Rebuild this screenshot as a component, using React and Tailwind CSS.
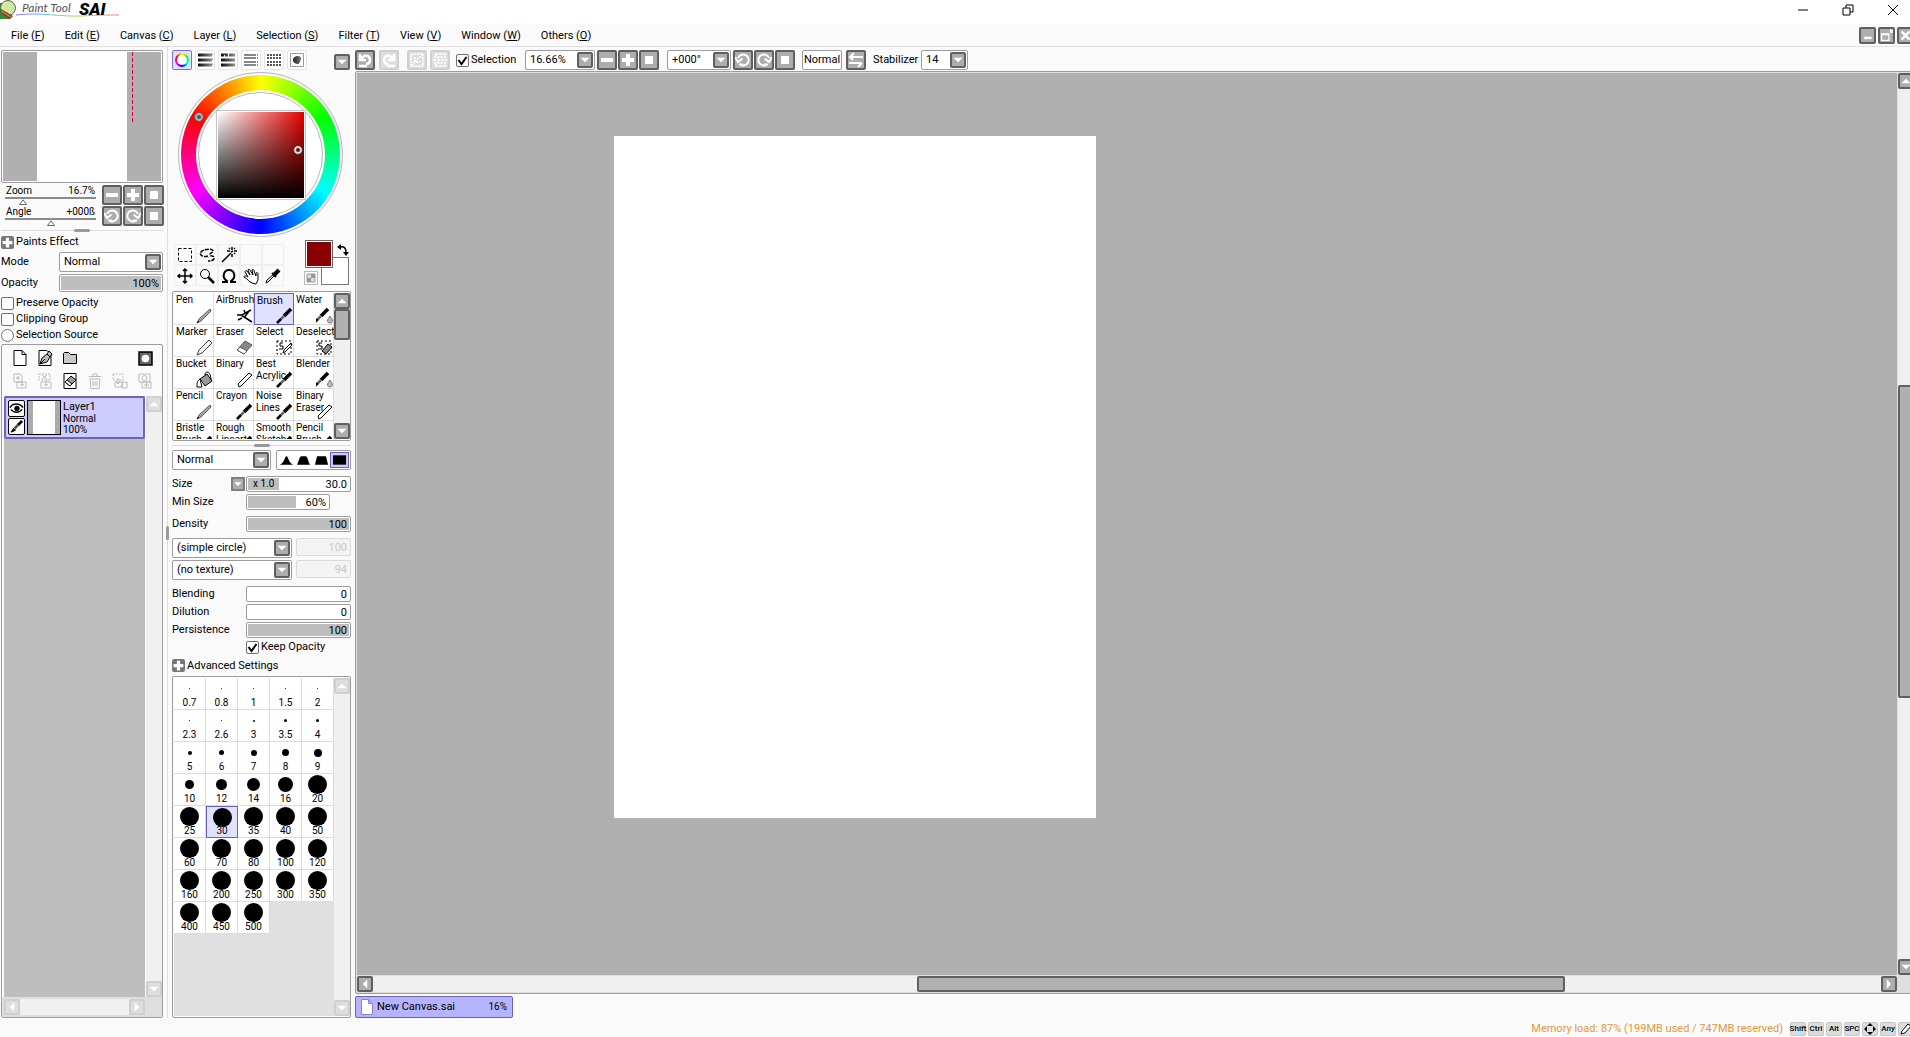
import { Fragment } from "react";

const MENUS = [
  ["File", "F"],
  ["Edit", "E"],
  ["Canvas", "C"],
  ["Layer", "L"],
  ["Selection", "S"],
  ["Filter", "T"],
  ["View", "V"],
  ["Window", "W"],
  ["Others", "O"],
];

const BRUSHES = [
  ["Pen", "pencil"],
  ["AirBrush", "airbrush"],
  ["Brush", "brush"],
  ["Water", "water"],
  ["Marker", "marker"],
  ["Eraser", "eraser"],
  ["Select", "select"],
  ["Deselect", "deselect"],
  ["Bucket", "bucket"],
  ["Binary", "binary"],
  ["Best Acrylic", "brush"],
  ["Blender", "water"],
  ["Pencil", "pencil"],
  ["Crayon", "brush"],
  ["Noise Lines", "brush"],
  ["Binary Eraser", "binary"],
  ["Bristle Brush", "brush"],
  ["Rough Lineart", "brush"],
  ["Smooth Sketch", "brush"],
  ["Pencil Brush", "brush"],
];

// [label, dot diameter]
const SIZES = [
  ["0.7", 1], ["0.8", 1], ["1", 1], ["1.5", 1], ["2", 1],
  ["2.3", 1], ["2.6", 1], ["3", 2], ["3.5", 3], ["4", 3],
  ["5", 4], ["6", 5], ["7", 6], ["8", 7], ["9", 8],
  ["10", 9], ["12", 11], ["14", 13], ["16", 15], ["20", 19],
  ["25", 19], ["30", 19], ["35", 19], ["40", 19], ["50", 19],
  ["60", 19], ["70", 19], ["80", 19], ["100", 19], ["120", 19],
  ["160", 19], ["200", 19], ["250", 19], ["300", 19], ["350", 19],
  ["400", 19], ["450", 19], ["500", 19],
];

const GLYPHS = {
  minus: <path d="M2 8h12" strokeWidth="4" />,
  plus: <path d="M2 8h12M8 2v12" strokeWidth="4" />,
  square: <path d="M4.500 4.500h7v7h-7z" fill="white" strokeWidth="1" />,
  down: <path d="M2 5h12l-6 6z" fill="white" stroke="none" />,
  up: <path d="M2 11h12L8 5z" fill="white" stroke="none" />,
  left: <path d="M11 2v12L5 8z" fill="white" stroke="none" />,
  right: <path d="M5 2v12l6-6z" fill="white" stroke="none" />,
  ccw: <path d="M5 12.500A5.500 5.500 0 1 0 3 6M0 5l3 5 4.500-3.500M8 12.500H4" strokeWidth="2" />,
  cw: <path d="M11 12.500A5.500 5.500 0 1 1 13 6M16 5l-3 5-4.500-3.500M8 12.500h4" strokeWidth="2" />,
  undo: <path d="M3 2v6h6M4 7C7 2 13 3 13 8c0 2.500-1.500 4-4 4M2 14h8" strokeWidth="2.500" />,
  redo: <path d="M13 2v6H7M12 7C9 2 3 3 3 8c0 2.500 1.500 4 4 4M6 14h8" strokeWidth="2.500" />,
  deselect: <path d="M2 2h12v12H2zM12 4l-6 5M6 5v5h5M3 13l3-3" strokeWidth="1.500" strokeDasharray="2 1" />,
  invert: <path d="M3 6V2h10v4M3 10v4h10v-4M1 8h14M5 6l3-2 3 2M5 10l3 2 3-2" strokeWidth="1.500" strokeDasharray="3 1" />,
  swap: <path d="M15 5H3M6 1L2 5l3 3M1 11h12M10 15l4-4" strokeWidth="2" />,
  min: <path d="M4 11h9" strokeWidth="3" />,
  restore: <path d="M2 6h9v8H2zM2 7h9M13 0v4h3M13 4l3-3" strokeWidth="1.500" />,
  close: <path d="M3 3l10 10M13 3L3 13" strokeWidth="3" />,
};

const BUTTON_SIZES = { sm: "size-4", md: "size-[17px]", lg: "size-5" };

function Glyph({ name }) {
  return (
    <svg viewBox="0 0 16 16" className="w-full h-full" fill="none" stroke="white" aria-hidden="true">
      {GLYPHS[name]}
    </svg>
  );
}

function ToolButton({ glyph, label, size = "lg", faded }) {
  return (
    <button
      aria-label={label}
      className={`shrink-0 border-2 rounded-xs ${BUTTON_SIZES[size]} ${
        faded ? "border-[#cfcfcf] bg-[#dedede]" : "border-[#606060] bg-[#adadad]"
      }`}
    >
      <Glyph name={glyph} />
    </button>
  );
}

function Select({ label, value, className = "" }) {
  return (
    <div className={`relative h-5 border border-[#9c9c9c] rounded-xs bg-white ${className}`}>
      <select aria-label={label} className="appearance-none w-full h-full pl-1 pr-4 outline-none bg-transparent">
        <option>{value}</option>
      </select>
      <span className="absolute right-px top-px size-4 border-2 border-[#606060] bg-[#adadad] rounded-xs pointer-events-none">
        <Glyph name="down" />
      </span>
    </div>
  );
}

function Gauge({ id, value, fill = 0, className = "h-4", disabled, children }) {
  return (
    <div
      className={`relative border rounded-xs p-px ${
        disabled ? "border-[#dadada] bg-[#f3f3f3] text-[#c8c8c8]" : "border-[#9c9c9c] bg-white"
      } ${className}`}
    >
      <div className="h-full bg-[#bebebe]" style={{ width: `${fill}%` }} />
      {children}
      <input
        id={id}
        aria-label={id}
        defaultValue={value}
        disabled={disabled}
        className="absolute inset-0 w-full h-full pr-[3px] bg-transparent text-right outline-none"
      />
    </div>
  );
}

function Check({ type = "checkbox", label, checked, className = "" }) {
  return (
    <label className={`flex items-center gap-[2px] h-4 ${className}`}>
      <span className="relative size-[13px] shrink-0">
        <input
          type={type}
          defaultChecked={checked}
          className={`block appearance-none size-[13px] border border-[#707070] bg-white ${
            type === "radio" ? "rounded-full" : "rounded-xs"
          }`}
        />
        {checked && (
          <svg viewBox="0 0 13 13" className="absolute inset-0 pointer-events-none" fill="none" stroke="black" strokeWidth="2">
            <path d="M2.500 6l3 4 5-7" />
          </svg>
        )}
      </span>
      {label}
    </label>
  );
}

function Grip() {
  return (
    <div className="h-[3px] flex items-center">
      <div className="flex-1 h-px bg-[#dcdcdc]" />
      <div className="w-4 h-[3px] rounded-xs bg-[#999999]" />
      <div className="flex-1 h-px bg-[#dcdcdc]" />
    </div>
  );
}

function VBar({ faded, children }) {
  return (
    <div className="w-4 shrink-0 flex flex-col bg-[#f0f0f0]">
      <ToolButton glyph="up" label="Scroll up" size="sm" faded={faded} />
      <div className="flex-1 min-h-0 flex flex-col">{children}</div>
      <ToolButton glyph="down" label="Scroll down" size="sm" faded={faded} />
    </div>
  );
}

function Header() {
  return (
    <header className="shrink-0">
      <div className="h-6 bg-white flex items-start">
        <svg width="122" height="22" viewBox="0 0 122 22" className="overflow-visible" aria-label="PaintTool SAI">
          <path d="M0 3h10v16H0z" fill="#2f8a3c" />
          <circle cx="8" cy="8" r="7.500" fill="#d3e8a4" stroke="#55703f" />
          <path d="M1 9l12 7-3 3L0 12z" fill="#6d3d2c" />
          <path d="M1 11l10 6" stroke="#df6a4a" strokeWidth="1.500" />
          <path d="M16 15c25-3 45 2 65 1s25-1 38-1" fill="none" stroke="url(#rainbow)" strokeWidth="1" />
          <defs>
            <linearGradient id="rainbow">
              <stop offset="0" stopColor="#9a6be0" />
              <stop offset=".3" stopColor="#5bc7e8" />
              <stop offset=".5" stopColor="#8ade6c" />
              <stop offset=".75" stopColor="#f0b13f" />
              <stop offset="1" stopColor="#ee7d7d" />
            </linearGradient>
          </defs>
          <text x="22" y="12" fontSize="12" fontStyle="italic" fill="#555" fontFamily="Lato, sans-serif">
            Paint Tool
          </text>
          <text x="79" y="15" fontSize="17" fontWeight="900" fontStyle="italic" fontFamily="Roboto, sans-serif">
            SAI
          </text>
        </svg>
        <div className="ml-auto flex gap-[33px] pr-[11px] pt-1">
          {["M1 6h10", "M1 4h7v7H1zM4 4V1h7v7H8", "M1 1l10 10M11 1L1 11"].map((d, i) => (
            <button key={d} aria-label={["Minimize", "Restore", "Close"][i]}>
              <svg width="12" height="12" fill="none" stroke="black" strokeWidth="1">
                <path d={d} />
              </svg>
            </button>
          ))}
        </div>
      </div>
      <nav className="h-[23px] flex items-center border-b border-[#e2e2e2] pl-[11px]">
        {MENUS.map(([name, key]) => (
          <button key={name} className="mr-5 pt-px">
            {name} (<span className="underline">{key}</span>)
          </button>
        ))}
        <div className="ml-auto -mr-1 flex gap-[2px] shrink-0">
          <ToolButton glyph="min" label="Minimize canvas" size="md" />
          <ToolButton glyph="restore" label="Restore canvas" size="md" />
          <ToolButton glyph="close" label="Close canvas" size="md" />
        </div>
      </nav>
    </header>
  );
}

function ViewSlider({ id, label, value, percent }) {
  return (
    <div className="w-[91px] h-5">
      <div className="flex justify-between h-3 leading-3 text-[10px] px-px">
        <label htmlFor={id}>{label}</label>
        <output htmlFor={id}>{value}</output>
      </div>
      <div className="relative h-2 border-t-2 border-[#8c8c8c]">
        <input id={id} type="range" defaultValue={percent} className="absolute inset-0 w-full h-full opacity-0" />
        <svg
          width="9"
          height="6"
          className="absolute top-0 -translate-x-1/2 pointer-events-none"
          style={{ left: `${percent}%` }}
          fill="white"
          stroke="#666"
        >
          <path d="M4.500 .8L8 5.500H1z" />
        </svg>
      </div>
    </div>
  );
}

function LayerIcon({ label, faded, children }) {
  return (
    <button aria-label={label} className={`w-[25px] h-4 flex justify-center ${faded ? "opacity-25" : ""}`}>
      <svg width="16" height="16" viewBox="0 0 16 16" fill="white" stroke="black">
        {children}
      </svg>
    </button>
  );
}

function LayerPanel() {
  return (
    <section className="flex-1 min-h-0 flex flex-col border border-[#9c9c9c] rounded-xs mt-px">
      <div className="flex px-[5px] pt-[5px]">
        <LayerIcon label="New layer">
          <path d="M2 .5h8l4 4v11H2zM10 .5v4h4" />
        </LayerIcon>
        <LayerIcon label="New linework layer">
          <path d="M2 .5h8l4 4v11H2z" />
          <path d="M3 14l2-6 5-4 3 3-3 5zM3 14l5-5M10 4l2-3 3 3-2 3" fill="#bbb" />
        </LayerIcon>
        <LayerIcon label="New folder">
          <path d="M1.500 3.500l1-1h4l2 2h6v9h-13z" fill="#c8c8c8" />
        </LayerIcon>
        <div className="flex-1" />
        <LayerIcon label="Layer mask">
          <path d="M2 2h13v13H2z" fill="#666" strokeWidth="1.500" />
          <circle cx="8.500" cy="8.500" r="3.800" stroke="none" />
        </LayerIcon>
      </div>
      <div className="flex px-[5px] mt-[7px] mb-[7px]">
        <LayerIcon label="Transfer down" faded>
          <path d="M2 1h6l2 2v6H2zM5 9h9v6H5zM6 3v4M4 5h4M10 9v4l-2-2M10 13l2-2" />
        </LayerIcon>
        <LayerIcon label="Merge down" faded>
          <path d="M2 1h11v6H2z" strokeDasharray="2 1" />
          <path d="M4 9h10v6H4zM9 7v6l-2-2M9 13l2-2M5 2l5 4M10 2L5 6" />
        </LayerIcon>
        <LayerIcon label="Clear layer">
          <path d="M2 .5h12v15H2z" />
          <path d="M3 9l6-6 5 4-6 6z" fill="#999" />
          <path d="M3 9l2-2 5 4-2 2z" />
        </LayerIcon>
        <LayerIcon label="Delete layer" faded>
          <path d="M2 3.500h12M6 3V1h4v2M3 6h10l-1 9.500H4zM6 8v5M8 8v5M10 8v5" />
        </LayerIcon>
        <LayerIcon label="Merge group" faded>
          <path d="M1 1h10v6H1z" strokeDasharray="2 1" />
          <path d="M3 9h7v5H3zM10 9h5v6h-5zM6 5v6l-2-2M6 11l2-2" />
        </LayerIcon>
        <LayerIcon label="Apply mask" faded>
          <path d="M2 1h11v8H2zM5 9h9v6H5zM7 12h5M9.500 10v4" />
          <circle cx="7.500" cy="5" r="2.500" />
        </LayerIcon>
      </div>
      <div className="flex-1 min-h-0 flex pl-[2px]">
        <div className="flex-1 bg-[#bebebe] mr-px">
          <div className="h-[43px] border-2 border-[#6f63b8] rounded-xs bg-[#ccccff] p-[2px] flex gap-[2px]">
            <div className="flex flex-col gap-px">
              <button aria-label="Toggle visibility" className="size-[17px] border border-black rounded-xs bg-white">
                <svg viewBox="0 0 16 16" fill="none" stroke="black">
                  <path d="M1 7c3-5 10-5 14 0M2 9c3 4 9 4 12 0" strokeWidth="1.500" />
                  <circle cx="8.500" cy="8" r="2.500" fill="black" />
                </svg>
              </button>
              <button aria-label="Edit target" className="size-[17px] border border-black rounded-xs bg-white">
                <svg viewBox="0 0 16 16" stroke="black">
                  <path d="M2 14l3-4 2 2z" />
                  <path d="M6 10l5-5" strokeWidth="3" stroke="#555" />
                  <path d="M10 6l4-4" strokeWidth="3" />
                </svg>
              </button>
            </div>
            <div className="w-[34px] h-[35px] border border-black bg-[#aaaaaa] px-[5px]">
              <div className="h-full bg-white" />
            </div>
            <div className="text-[10px] leading-[11px] pt-px">
              <p className="text-[11px] leading-3">Layer1</p>
              <p>Normal</p>
              <p>100%</p>
            </div>
          </div>
        </div>
        <VBar faded />
      </div>
      <div className="flex p-[2px] pr-px bg-[#dedede]">
        <ToolButton glyph="left" label="Scroll left" size="sm" faded />
        <div className="flex-1 bg-[#f0f0f0]" />
        <ToolButton glyph="right" label="Scroll right" size="sm" faded />
        <div className="w-4" />
      </div>
    </section>
  );
}

function Navigator() {
  return (
    <aside className="w-[163px] shrink-0 flex flex-col pl-px pt-[3px]">
      <div className="h-[133px] shrink-0 border border-[#9c9c9c] rounded-xs p-px">
        <div className="h-full bg-[#b0b0b0] pl-[34px]">
          <div className="h-full w-[90px] bg-white relative">
            <div className="absolute top-0 left-[95px] w-px h-[70px] bg-[repeating-linear-gradient(#e0003c_0_4px,transparent_4px_6px)]" />
          </div>
        </div>
      </div>
      <div className="grid grid-cols-[100px_20px_20px_20px] gap-y-px pt-[2px] gap-x-px">
        <div className="pl-1">
          <ViewSlider id="zoom" label="Zoom" value="16.7%" percent={20} />
        </div>
        <ToolButton glyph="minus" label="Zoom out" />
        <ToolButton glyph="plus" label="Zoom in" />
        <ToolButton glyph="square" label="Reset zoom" />
        <div className="pl-1">
          <ViewSlider id="angle" label="Angle" value="+000ß" percent={50} />
        </div>
        <ToolButton glyph="ccw" label="Rotate left" />
        <ToolButton glyph="cw" label="Rotate right" />
        <ToolButton glyph="square" label="Reset rotation" />
      </div>
      <div className="pt-[3px]">
        <Grip />
      </div>
      <button className="flex items-center gap-[2px] h-5">
        <span className="size-[13px] bg-[#777] rounded-xs">
          <Glyph name="plus" />
        </span>
        Paints Effect
      </button>
      <div className="flex items-center">
        <span className="w-[58px]">Mode</span>
        <Select label="Mode" value="Normal" className="flex-1" />
      </div>
      <div className="flex items-center mt-0.5 mb-[3px]">
        <label htmlFor="Opacity" className="w-[58px]">Opacity</label>
        <Gauge id="Opacity" value="100%" fill={100} className="flex-1 h-[18px]" />
      </div>
      <Check label="Preserve Opacity" />
      <Check label="Clipping Group" />
      <Check type="radio" label="Selection Source" />
      <LayerPanel />
    </aside>
  );
}

function ColorWheel() {
  return (
    <div className="ml-1.5 mt-[2px] size-[165px] shrink-0 rounded-full border border-[#b5b5b5] p-[2px] relative">
      <div className="size-full rounded-full p-[15px] bg-[conic-gradient(#ff0,#0f0,#0ff,#00f,#f0f,#f00,#ff0)]">
        <div className="size-full rounded-full bg-white p-[2px]">
          <div className="size-full rounded-full border border-[#b5b5b5] flex items-center justify-center">
            <div className="border border-[#c5c5c5] p-px bg-white">
              <div className="size-[86px] bg-[linear-gradient(to_top,#000,transparent),linear-gradient(to_right,#fff,#e80000)]" />
            </div>
          </div>
        </div>
      </div>
      <span className="absolute left-4 top-10 size-2 rounded-full border-2 border-[#b0b0b0] bg-[#555] outline outline-[#666]" />
      <span className="absolute left-[115px] top-[73px] size-2 rounded-full border-2 border-[#e0e0e0] outline outline-[#444]" />
    </div>
  );
}

const TOOLS = [
  ["Rectangle select", <path key="a" d="M2.500 2.500h13v13h-13z" strokeDasharray="3 2" />],
  ["Lasso", <path key="a" d="M10 10C4 12 1 8 3 6c2-3 12-4 12-1 0 2-4 2-3 4s4 0 4 3-4 3-6 3" strokeDasharray="4 1" strokeWidth="1.500" />],
  ["Magic wand", <path key="a" d="M2 16l9-9M12 1v3M12 8v3M7 5h3M14 5h3M9 2l1 1M15 2l-1 1M15 8l-1-1M13 5l-2 1" strokeWidth="1.500" />],
  ["Empty slot", null],
  ["Empty slot", null],
  ["Move", <path key="a" d="M9 2v14M2 9h14M7 4l2-2 2 2M7 14l2 2 2-2M4 7L2 9l2 2M14 7l2 2-2 2" strokeWidth="1.500" />],
  ["Magnifier", <g key="a"><circle cx="7" cy="7" r="4.500" /><path d="M10 10l6 6" strokeWidth="2.500" /></g>],
  ["Rotate", <path key="a" d="M2 15h5v-1C1 10 4 3 9 3s8 7 2 11v1h5" strokeWidth="2" />],
  [
    "Hand",
    <path
      key="a"
      d="M10 16C7 15 6 12 2 10c0-2 2-1 4 0L3 5c0-1 1-2 2-1l3 4L6 3c0-1 2-1 2 0l3 5-1-5c1-1 2 0 2 1l2 5 0-3c1-1 2 0 2 1v6l-2 4z"
      fill="white"
    />,
  ],
  ["Eyedropper", <g key="a"><path d="M10 8l5-5" strokeWidth="4" /><path d="M8 6l4 4" strokeWidth="2" /><path d="M2 16l1-3 7-6 1 1-7 7z" /></g>],
];

function Toolbox() {
  return (
    <div className="flex pl-0.5 pr-0.5 mt-[7px]">
      <div className="grid grid-cols-[repeat(5,22px)] grid-rows-[21px_21px]">
        {TOOLS.map(([label, icon], i) => (
          <button key={i} aria-label={label} className="border border-[#efefef] flex items-center justify-center">
            <svg width="18" height="18" fill="none" stroke="black" strokeWidth="1">
              {icon}
            </svg>
          </button>
        ))}
      </div>
      <div className="relative ml-auto w-[45px] h-[45px] -mt-1">
        <button aria-label="Secondary color" className="absolute right-0 bottom-0 size-7 border border-[#777] bg-white" />
        <button aria-label="Primary color" className="absolute left-px top-0 size-7 border border-[#666] bg-white p-px">
          <span className="block size-full bg-[#8b0000]" />
        </button>
        <button aria-label="Transparent color" className="absolute left-0 bottom-0 size-3.5 border border-[#bbb] bg-white">
          <svg viewBox="0 0 12 12">
            <path d="M2 2h8v8H2z" fill="#ddd" stroke="#999" />
            <path d="M6 2h4v4H6zM2 6h4v4H2z" fill="#999" />
          </svg>
        </button>
        <svg width="12" height="12" className="absolute right-0 top-1" stroke="black" strokeWidth="1.500">
          <path d="M3 3c4-1 6 1 6 5" fill="none" />
          <path d="M4 0v6L0 3zM6 8h6l-3 4z" stroke="none" />
        </svg>
      </div>
    </div>
  );
}

const DROP = <path d="M14 9c-3.500 4-3 7 0 7s3.500-3 0-7z" fill="#bbb" stroke="#777" />;
const BRUSH = (
  <>
    <path d="M8 9l7-7" strokeWidth="3.500" />
    <path d="M5 12l3-3" strokeWidth="2.500" stroke="#666" />
    <path d="M1 16l4-4" strokeWidth="2.500" />
  </>
);

const BRUSH_ICONS = {
  pencil: (
    <>
      <path d="M1 16l2-4L14 2l1 2L5 14z" fill="#aaa" stroke="#555" />
      <path d="M1 16l2-2" />
    </>
  ),
  marker: <path d="M1 16l2-5L13 1l3 3L6 14z" fill="#eee" stroke="#444" />,
  binary: <path d="M3 16l-1-3L13 2l3 2L5 15z" fill="white" />,
  eraser: (
    <>
      <path d="M1 11L9 2l7 4-8 9z" fill="#888" stroke="#555" />
      <path d="M1 11l3-3 7 4-3 3z" fill="white" stroke="#555" />
    </>
  ),
  airbrush: <path d="M1 8h5l9-5M5 8l11 7M6 11l-4 2M9 6L8 3M13 4l-5 7" strokeWidth="1.500" fill="none" />,
  brush: BRUSH,
  water: (
    <>
      <g transform="translate(-3 0)">{BRUSH}</g>
      {DROP}
    </>
  ),
  select: (
    <>
      <path d="M1 2h14v13H1z" fill="none" strokeDasharray="2 2" />
      <path d="M7 4H4v3h3v3H3M7 14l1-3 7-7 1 2-7 7z" fill="none" />
    </>
  ),
  deselect: (
    <>
      <path d="M1 2h14v13H1z" fill="none" strokeDasharray="2 2" />
      <path d="M6 4H3v3h3v3H2" fill="none" />
      <path d="M6 12l6-7 4 3-6 7z" fill="#888" />
    </>
  ),
  bucket: (
    <>
      <path d="M4 8l7-5 5 7-7 5z" fill="#999" />
      <path d="M4 8c-3 2-3 4-3 8h5L4 8M9 4c0-5 6-4 6 5" fill="none" />
    </>
  ),
};

function BrushGrid() {
  return (
    <div className="h-[150px] shrink-0 border border-[#9c9c9c] rounded-xs pl-px py-px flex mt-[5px]">
      <div className="w-40 shrink-0 h-full overflow-hidden grid grid-cols-4 auto-rows-[32px] content-start bg-white">
        {BRUSHES.map(([name, icon], i) => (
          <button
            key={name}
            className={`relative text-left text-[10px] leading-3 pl-[2px] pt-px flex flex-col ${
              i === 2 ? "border border-[#6a62b8] bg-[#e0e0ff]" : "border-r border-b border-[#dcdcdc]"
            }`}
          >
            {name.split(" ").map((word) => (
              <span key={word}>{word}</span>
            ))}
            <svg width="17" height="17" className="absolute right-0 bottom-0" stroke="black" fill="black">
              {BRUSH_ICONS[icon]}
            </svg>
          </button>
        ))}
      </div>
      <VBar>
        <div className="h-[31px] border-2 border-[#606060] bg-[#b0b0b0] rounded-xs" />
      </VBar>
    </div>
  );
}

const SHAPES = [
  "M1 12C6 10 6 3 8 3s2 7 7 9z",
  "M1 12C3 10 3 3 6 3h4c3 0 3 7 5 9z",
  "M1 12L3 4q0-1 1-1h8q1 0 1 1l2 8z",
  "M1 2h14v10H1z",
];

function BrushSettings() {
  return (
    <div className="shrink-0">
      <div className="flex gap-[5px] mt-[3px]">
        <Select label="Blend mode" value="Normal" className="w-[99px]" />
        <div className="flex-1 h-5 border border-[#9c9c9c] rounded-xs bg-white flex p-px">
          {SHAPES.map((d, i) => (
            <button
              key={d}
              aria-label={`Edge shape ${i + 1}`}
              className={`flex-1 flex items-center justify-center ${i === 3 ? "border border-[#6a62b8] bg-[#ccccff]" : ""}`}
            >
              <svg width="15" height="14" viewBox="0 0 16 14">
                <path d={d} />
              </svg>
            </button>
          ))}
        </div>
      </div>
      <div className="grid grid-cols-[74px_1fr] auto-rows-[18px] items-center mt-[5px]">
        <label htmlFor="Size" className="flex justify-between items-center pr-px">
          Size
          <span className="size-3.5 border-2 border-[#808080] bg-[#adadad]">
            <Glyph name="down" />
          </span>
        </label>
        <Gauge id="Size" value="30.0" fill={31}>
          <span className="absolute left-1.5 top-0 text-[10px] leading-[14px]">x 1.0</span>
        </Gauge>
        <label htmlFor="Min Size">Min Size</label>
        <Gauge id="Min Size" value="60%" fill={60} className="h-4 w-[84px]" />
      </div>
      <div className="grid grid-cols-[74px_1fr] items-center h-[18px] mt-1">
        <label htmlFor="Density">Density</label>
        <Gauge id="Density" value="100" fill={100} />
      </div>
      <div className="grid grid-cols-[120px_1fr] gap-x-1 gap-y-[2px] mt-[5px]">
        <Select label="Brush shape" value="(simple circle)" />
        <Gauge id="Shape strength" value="100" disabled className="h-[18px]" />
        <Select label="Texture" value="(no texture)" />
        <Gauge id="Texture strength" value="94" disabled className="h-[18px]" />
      </div>
      <div className="grid grid-cols-[74px_1fr] auto-rows-[18px] items-center mt-[5px]">
        {[["Blending", "0", 0], ["Dilution", "0", 0], ["Persistence", "100", 100]].map(([name, value, fill]) => (
          <Fragment key={name}>
            <label htmlFor={name}>{name}</label>
            <Gauge id={name} value={value} fill={fill} />
          </Fragment>
        ))}
      </div>
      <Check label="Keep Opacity" checked className="pl-[74px]" />
      <button className="flex items-center gap-[2px] h-[21px]">
        <span className="size-[13px] bg-[#777] rounded-xs">
          <Glyph name="plus" />
        </span>
        Advanced Settings
      </button>
    </div>
  );
}

function SizeGrid() {
  return (
    <div className="flex-1 min-h-0 border border-[#9c9c9c] rounded-xs pl-px py-px flex">
      <div className="w-40 shrink-0 bg-[#e0e0e0] grid grid-cols-5 auto-rows-[32px] content-start overflow-hidden">
        {SIZES.map(([label, d]) => (
          <button
            key={label}
            className={`relative flex flex-col justify-end text-center text-[10px] leading-3 ${
              label === "30" ? "border border-[#6a62b8] bg-[#e0e0ff]" : "border-r border-b border-[#dcdcdc] bg-white"
            }`}
          >
            <span className="absolute inset-x-0 top-0 h-[21px] flex items-center justify-center">
              <span className="rounded-full bg-black" style={{ width: d, height: d }} />
            </span>
            <span className="relative">{label}</span>
          </button>
        ))}
      </div>
      <VBar faded />
    </div>
  );
}

const BARS = [
  <path key="b" d="M1 3h14v.1M1 8h14v.1M1 13h14v.1" stroke="url(#ramp)" strokeWidth="3" />,
  <path key="b" d="M1 3h3v.1M5 3h3M9 3h6M1 8h14M1 13h14" stroke="url(#ramp)" strokeWidth="3" />,
  <path key="b" d="M1 3h14M1 6h14M1 10h14M1 13h14" stroke="#888" strokeWidth="2" strokeDasharray="12 1" />,
  <path key="b" d="M1 3h14M1 6h14M1 10h14M1 13h14" stroke="#555" strokeWidth="2" strokeDasharray="2 1" />,
  <g key="b">
    <path d="M1.500 1.500h13v13h-13z" stroke="#999" />
    <path d="M4 8c0-5 8-5 8-2s-2 7-4 6-4-1-4-4z" fill="url(#ramp)" />
  </g>,
];

function BrushPanel() {
  return (
    <aside className="w-[179px] shrink-0 flex flex-col pt-[3px]">
      <div className="flex gap-[3px] h-5 shrink-0">
        <button aria-label="Color wheel" className="size-5 border border-[#7a72c8] bg-[#e0e0ff] rounded-xs p-0.5">
          <span className="block size-full rounded-full p-[2px] bg-[conic-gradient(#ff0,#0f0,#0ff,#00f,#f0f,#f00,#ff0)]">
            <span className="block size-full rounded-full bg-white" />
          </span>
        </button>
        {BARS.map((bar, i) => (
          <button key={i} aria-label={`Color panel ${i + 2}`} className="size-5 border border-[#e4e4e4] rounded-xs bg-white p-px">
            <svg viewBox="0 0 16 16" fill="none">
              <defs>
                <linearGradient id="ramp" gradientUnits="userSpaceOnUse" x2="16">
                  <stop offset="0" />
                  <stop offset="1" stopColor="#999" />
                </linearGradient>
              </defs>
              {bar}
            </svg>
          </button>
        ))}
        <div className="ml-auto pt-1 pr-px">
          <ToolButton glyph="down" label="Panel menu" size="sm" />
        </div>
      </div>
      <ColorWheel />
      <Toolbox />
      <BrushGrid />
      <div className="pt-[3px]">
        <Grip />
      </div>
      <BrushSettings />
      <SizeGrid />
    </aside>
  );
}

function CanvasToolbar() {
  return (
    <div className="h-5 flex items-center shrink-0 whitespace-nowrap">
      <div className="flex gap-1">
        <ToolButton glyph="undo" label="Undo" />
        <ToolButton glyph="redo" label="Redo" faded />
      </div>
      <div className="flex gap-[3px] ml-2">
        <ToolButton glyph="deselect" label="Deselect" faded />
        <ToolButton glyph="invert" label="Invert selection" faded />
      </div>
      <Check label="Selection" checked className="ml-1.5 w-[69px]" />
      <Select label="Zoom level" value="16.66%" className="w-[70px]" />
      <div className="flex gap-px ml-[2px]">
        <ToolButton glyph="minus" label="Zoom out" />
        <ToolButton glyph="plus" label="Zoom in" />
        <ToolButton glyph="square" label="Reset zoom" />
      </div>
      <Select label="Rotation" value="+000°" className="w-16 ml-2" />
      <div className="flex gap-px ml-[2px]">
        <ToolButton glyph="ccw" label="Rotate left" />
        <ToolButton glyph="cw" label="Rotate right" />
        <ToolButton glyph="square" label="Reset rotation" />
      </div>
      <button className="w-10 h-5 ml-[7px] border border-[#9c9c9c] rounded-xs bg-white">Normal</button>
      <div className="ml-1 flex">
        <ToolButton glyph="swap" label="Flip view" />
      </div>
      <span className="ml-[7px] w-12">Stabilizer</span>
      <Select label="Stabilizer" value="14" className="w-[47px]" />
    </div>
  );
}

function Workspace() {
  return (
    <main className="flex-1 min-w-0 -mr-1.5 flex flex-col pt-[3px]">
      <CanvasToolbar />
      <div className="flex-1 min-h-0 mt-px border border-[#9c9c9c] rounded-xs p-px flex flex-col bg-[#dedede]">
        <div className="flex-1 min-h-0 flex gap-px">
          <div className="flex-1 bg-[#b0b0b0] pt-[63px] pl-[257px]">
            <div className="w-[482px] h-[682px] bg-white" />
          </div>
          <VBar>
            <div className="basis-[34%] shrink-0" />
            <div className="basis-[36%] border-2 border-[#606060] bg-[#b0b0b0] rounded-xs" />
          </VBar>
        </div>
        <div className="flex mt-px mr-[17px] bg-[#f0f0f0]">
          <ToolButton glyph="left" label="Scroll left" size="sm" />
          <div className="flex-1 flex pl-[2px]">
            <div className="basis-[36%]" />
            <div className="basis-[43%] border-2 border-[#606060] bg-[#b0b0b0] rounded-xs" />
          </div>
          <ToolButton glyph="right" label="Scroll right" size="sm" />
        </div>
      </div>
      <button className="w-[158px] h-[22px] mt-[2px] shrink-0 border border-[#6a62b8] rounded-xs bg-[#b4b4ff] flex items-center px-[5px] gap-1">
        <svg width="12" height="16" fill="white" stroke="#8888bb">
          <path d="M.5 .5h7l4 4v11H.5zM7.500 .5v4h4" />
        </svg>
        New Canvas.sai
        <span className="ml-auto text-[10px]">16%</span>
      </button>
    </main>
  );
}

function StatusBar() {
  return (
    <footer className="h-[19px] shrink-0 flex items-center justify-end -mr-1 pt-[2px]">
      <span className="text-[#dd9a3c] mr-[7px]">Memory load: 87% (199MB used / 747MB reserved)</span>
      <div className="flex gap-[2px]">
        {["Shift", "Ctrl", "Alt", "SPC", "move", "Any", "pen"].map((key) => (
          <kbd
            key={key}
            className="w-4 h-3.5 bg-[#dcdcdc] border border-[#c8c8c8] rounded-xs flex items-center justify-center font-[Roboto,sans-serif] text-[8px] leading-3 font-medium"
          >
            {key === "move" && (
              <svg width="12" height="12" className="shrink-0">
                <path d="M6 0l3 3H3zM6 12l3-3H3zM0 6l3-3v6zM12 6L9 3v6z" />
              </svg>
            )}
            {key === "pen" && (
              <svg width="12" height="12" className="shrink-0" fill="white" stroke="black">
                <path d="M1 11l1-3 6-7 3 2-6 7z" />
              </svg>
            )}
            {key !== "move" && key !== "pen" && key}
          </kbd>
        ))}
      </div>
    </footer>
  );
}

export default function App() {
  return (
    <div className="h-screen overflow-hidden flex flex-col bg-[#fafafa] text-black text-[11px] leading-4 font-[Roboto,sans-serif]">
      <Header />
      <div className="flex-1 min-h-0 flex">
        <Navigator />
        <div className="w-[9px] shrink-0 flex justify-center items-center relative">
          <div className="h-full w-px bg-[#dedede]" />
          <div className="absolute w-[3px] h-3.5 rounded-xs bg-[#999]" />
        </div>
        <BrushPanel />
        <div className="w-1 shrink-0" />
        <Workspace />
      </div>
      <StatusBar />
    </div>
  );
}
